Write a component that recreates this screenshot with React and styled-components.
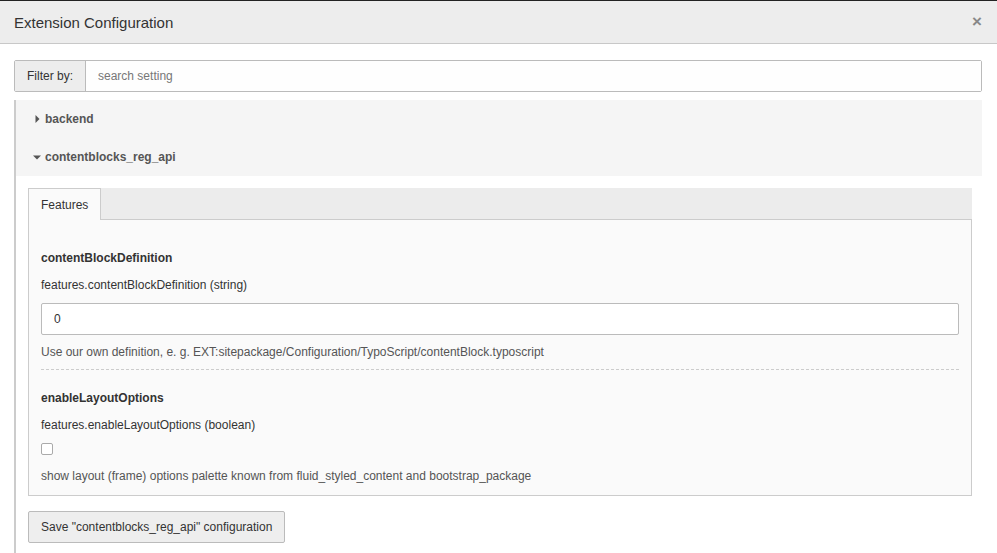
import styled, { createGlobalStyle } from 'styled-components';

const Global = createGlobalStyle`
  html, body { margin: 0; background: #fff; }
  body { font-family: "Liberation Sans", Arial, sans-serif; font-size: 12px; color: #333; }
`;

const Header = styled.div`
  height: 42px;
  border-top: 1px solid #222;
  background: #ededed;
  border-bottom: 1px solid #c8c8c8;
  display: flex;
  align-items: center;
  justify-content: space-between;
  padding: 0 14px;
  h1 { margin: 0; font-size: 15px; font-weight: normal; color: #333; }
  span { font-size: 17px; color: #888; font-weight: bold; margin-right: 1px; }
`;

const Body = styled.div`
  padding: 16px 15px 0 14px;
`;

const Filter = styled.div`
  display: flex;
  height: 30px;
  border: 1px solid #bbb;
  border-radius: 2px;
  label {
    background: #ededed;
    border-right: 1px solid #bbb;
    padding: 0 12px;
    display: flex;
    align-items: center;
    color: #333;
  }
  input {
    flex: 1;
    border: 0;
    background: #fefefe;
    padding: 0 12px;
    font: inherit;
    color: #555;
    outline: none;
    &::placeholder { color: #777; }
  }
`;

const Panel = styled.div`
  margin-top: 8px;
  border-left: 2px solid #ccc;
  min-height: 460px;
`;

const Row = styled.div`
  height: 38px;
  background: #f5f5f5;
  display: flex;
  align-items: center;
  padding-left: 17px;
  font-weight: bold;
  color: #555;
  gap: 4px;
`;

const Content = styled.div`
  padding: 12px 10px 0 12px;
`;

const TabBar = styled.div`
  display: flex;
  height: 31px;
  background: #ececec;
  border-bottom: 1px solid #ccc;
`;

const Tab = styled.div`
  background: #fafafa;
  border: 1px solid #ccc;
  border-bottom: 0;
  margin-bottom: -1px;
  padding: 0 12px;
  display: flex;
  align-items: center;
  color: #333;
`;

const TabBody = styled.div`
  border: 1px solid #ccc;
  border-top: 0;
  background: #fafafa;
  padding: 31px 12px 12px;
`;

const Item = styled.div`
  & + & { border-top: 1px dashed #ccc; margin-top: 10px; padding-top: 21px; }
  h4 { margin: 0 0 13px; font-size: 12px; font-weight: bold; color: #333; }
  .key { margin-bottom: 11px; }
  .help { color: #555; margin-top: 10px; }
`;

const TextInput = styled.input`
  width: 100%;
  box-sizing: border-box;
  height: 32px;
  border: 1px solid #bbb;
  border-radius: 2px;
  background: #fff;
  padding: 0 12px;
  font: inherit;
  color: #333;
`;

const Check = styled.div`
  width: 10px;
  height: 10px;
  border: 1px solid #aaa;
  border-radius: 2px;
  background: #fff;
  margin: 5px 0 14px;
`;

const Button = styled.button`
  margin-top: 15px;
  height: 32px;
  padding: 0 12px;
  background: #eee;
  border: 1px solid #bbb;
  border-radius: 2px;
  font: inherit;
  color: #333;
`;

const Caret = ({ open }) => (
  <svg width="8" height="8" viewBox="0 0 8 8">
    {open ? <path d="M0 2.5h8L4 6.5z" fill="#555" /> : <path d="M2.5 0v8L6.5 4z" fill="#555" />}
  </svg>
);

export default function App() {
  return (
    <>
      <Global />
      <Header>
        <h1>Extension Configuration</h1>
        <span>×</span>
      </Header>
      <Body>
        <Filter>
          <label>Filter by:</label>
          <input placeholder="search setting" />
        </Filter>
        <Panel>
          <Row><Caret />backend</Row>
          <Row><Caret open />contentblocks_reg_api</Row>
          <Content>
            <TabBar><Tab>Features</Tab></TabBar>
            <TabBody>
              <Item>
                <h4>contentBlockDefinition</h4>
                <div className="key">features.contentBlockDefinition (string)</div>
                <TextInput defaultValue="0" />
                <div className="help">Use our own definition, e. g. EXT:sitepackage/Configuration/TypoScript/contentBlock.typoscript</div>
              </Item>
              <Item>
                <h4>enableLayoutOptions</h4>
                <div className="key">features.enableLayoutOptions (boolean)</div>
                <Check />
                <div className="help" style={{ marginTop: 0 }}>show layout (frame) options palette known from fluid_styled_content and bootstrap_package</div>
              </Item>
            </TabBody>
            <Button>Save "contentblocks_reg_api" configuration</Button>
          </Content>
        </Panel>
      </Body>
    </>
  );
}
